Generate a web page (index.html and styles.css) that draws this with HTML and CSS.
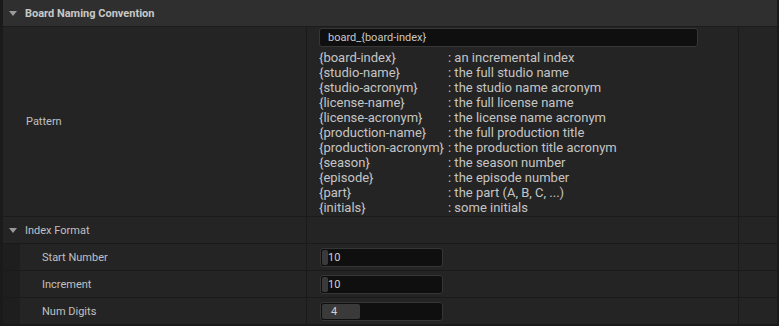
FILE: index.html
```html
<!DOCTYPE HTML>
<html lang="en">
<head>
<meta charset="utf-8">
<title>Board Naming Convention</title>
<link rel="stylesheet" href="styles.css">
</head>
<body>

<div class="panel">

  <div class="category">
    <span class="arrow"></span>Board Naming Convention
  </div>

  <div class="row pattern">
    <div class="name">Pattern</div>
    <div class="value">
      <div class="textbox">board_{board-index}</div>
      <div class="tokens">
        <span>{board-index}</span><span>: an incremental index</span>
        <span>{studio-name}</span><span>: the full studio name</span>
        <span>{studio-acronym}</span><span>: the studio name acronym</span>
        <span>{license-name}</span><span>: the full license name</span>
        <span>{license-acronym}</span><span>: the license name acronym</span>
        <span>{production-name}</span><span>: the full production title</span>
        <span>{production-acronym}</span><span>: the production title acronym</span>
        <span>{season}</span><span>: the season number</span>
        <span>{episode}</span><span>: the episode number</span>
        <span>{part}</span><span>: the part (A, B, C, ...)</span>
        <span>{initials}</span><span>: some initials</span>
      </div>
    </div>
    <div class="extra"></div>
  </div>

  <div class="row group">
    <div class="name"><span class="arrow"></span>Index Format</div>
    <div class="value"></div>
    <div class="extra"></div>
  </div>

  <div class="row child">
    <div class="name">Start Number</div>
    <div class="value">
      <div class="spin"><span class="fill" style="width:6px"></span><span class="num">10</span></div>
    </div>
    <div class="extra"></div>
  </div>

  <div class="row child">
    <div class="name">Increment</div>
    <div class="value">
      <div class="spin"><span class="fill" style="width:6px"></span><span class="num">10</span></div>
    </div>
    <div class="extra"></div>
  </div>

  <div class="row child">
    <div class="name">Num Digits</div>
    <div class="value">
      <div class="spin"><span class="fill" style="width:38px"></span><span class="num shift">4</span></div>
    </div>
    <div class="extra"></div>
  </div>

</div>

</body>
</html>
```

FILE: styles.css
```css
html {height: 100%;}

* {box-sizing: border-box;}

body {
margin: 0;
padding: 0;
background: #1a1a1a;
color: #c0c0c0;
font-family: Roboto, "Noto Sans", sans-serif;
font-size: 11px;
height: 100%;
}

.panel {
margin: 0 2px 0 3px;
display: flex;
flex-direction: column;
}

.category {
height: 27px;
background: #2f2f2f;
border-bottom: 1px solid #1c1c1c;
display: flex;
align-items: center;
font-weight: bold;
color: #c8c8c8;
}

.arrow {
width: 0;
height: 0;
margin: 0 8px 0 6px;
border-left: 4.5px solid transparent;
border-right: 4.5px solid transparent;
border-top: 5px solid #9a9a9a;
}

.row {
display: flex;
background: #1e1e1e;
border-bottom: 1px solid #1a1a1a;
}

.name {
width: 304px;
padding-left: 23px;
background: #242424;
border-right: 1px solid #1a1a1a;
display: flex;
align-items: center;
}

.value {
flex: 1;
background: #242424;
border-right: 1px solid #1a1a1a;
}

.extra {
width: 38px;
background: #242424;
}

.pattern .value {
padding: 1px 40px 1px 12px;
}

.textbox {
height: 19px;
background: #0f0f0f;
border: 1px solid #363636;
border-radius: 3px;
padding-left: 8px;
display: flex;
align-items: center;
color: #c8c8c8;
}

.tokens {
display: grid;
grid-template-columns: 129px auto;
margin-top: 3px;
font-size: 13px;
line-height: 15px;
color: #c4c4c4;
}

.group {
height: 27px;
}

.group .name {
padding-left: 0;
}

.child {
height: 27px;
}

.child .name {
margin-left: 17px;
width: 287px;
padding-left: 22px;
}

.child .value {
display: flex;
align-items: center;
padding-left: 13px;
}

.spin {
position: relative;
width: 123px;
height: 19px;
background: #0f0f0f;
border: 1px solid #363636;
border-radius: 3px;
display: flex;
align-items: center;
}

.fill {
position: absolute;
left: 1px;
top: 1px;
bottom: 1px;
background: #3a3a3a;
border-radius: 2px;
}

.num {
position: relative;
padding-left: 7px;
color: #d0d0d0;
}

.num.shift {
padding-left: 10px;
}
```
